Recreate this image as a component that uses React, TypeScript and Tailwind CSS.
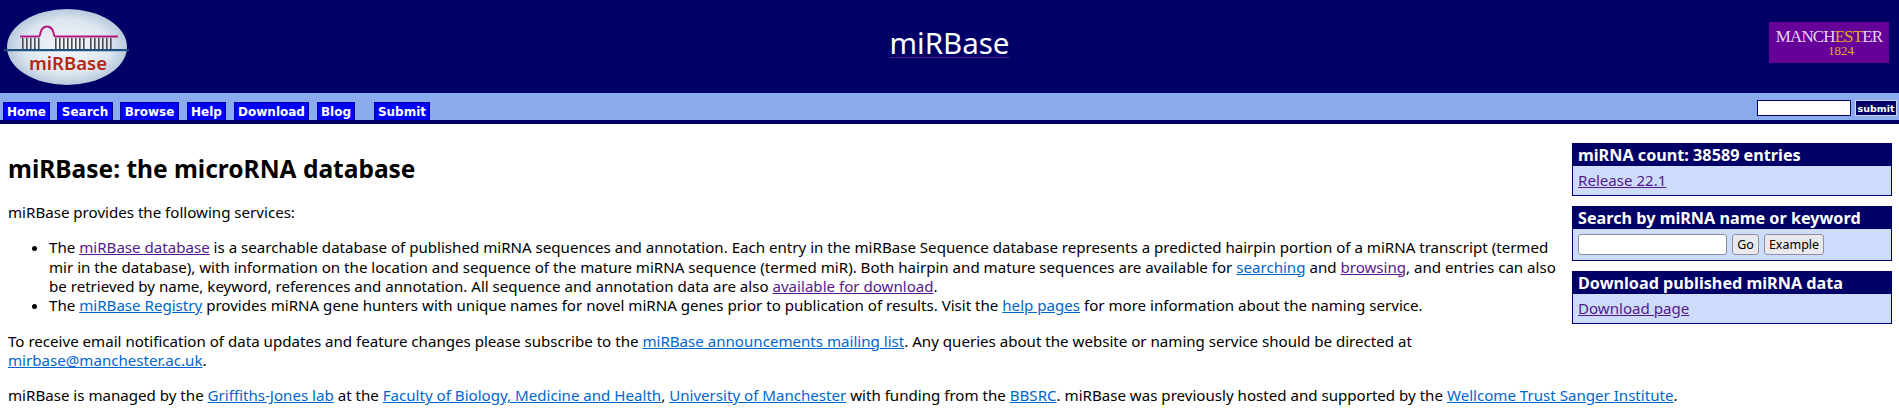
const sans = 'font-["Noto_Sans",sans-serif]';

const tabs = [
  { label: 'Home', cls: 'w-[47px] mr-[7px]' },
  { label: 'Search', cls: 'w-[56px] mr-[7px]' },
  { label: 'Browse', cls: 'w-[59px] mr-[8px]' },
  { label: 'Help', cls: 'w-[39px] mr-[8px]' },
  { label: 'Download', cls: 'w-[75px] mr-[8px]' },
  { label: 'Blog', cls: 'w-[38px] mr-[19px]' },
  { label: 'Submit', cls: 'w-[56px]' },
];

function Logo() {
  const rungs = [22, 26, 30, 34, 38, 55, 59, 63, 67, 71, 75, 79, 83, 90, 94, 98, 102, 106, 110];
  return (
    <svg width="130" height="84" viewBox="0 0 130 84" className="block">
      <defs>
        <radialGradient id="oval" cx="50%" cy="50%" r="55%">
          <stop offset="0%" stopColor="#f4f7fa" />
          <stop offset="65%" stopColor="#dde6ef" />
          <stop offset="100%" stopColor="#a9c0d6" />
        </radialGradient>
      </defs>
      <ellipse cx="67" cy="42" rx="60" ry="38" fill="url(#oval)" />
      {rungs.map((x) => (
        <rect key={x} x={x} y="33" width="1.6" height="11" fill="#4a4a52" />
      ))}
      <path d="M20 31.5H39C41 31.5 39 21.5 47 21.5C55 21.5 53 31.5 55 31.5H118" fill="none" stroke="#b5177f" strokeWidth="2" />
      <rect x="4" y="44" width="125" height="2.2" fill="#1d4f80" />
      <text x="29" y="65" textLength="78" lengthAdjust="spacingAndGlyphs" fontFamily="Noto Sans, sans-serif" fontSize="18" fontWeight="600" fill="#b22a10">
        miRBase
      </text>
    </svg>
  );
}

function SideBox({ title, children }: { title: string; children: React.ReactNode }) {
  return (
    <div className="border border-[#000066] bg-[#cddcfb] mb-[10px]">
      <div className={`h-[22px] bg-[#000066] text-white font-bold text-[16.2px] leading-[22px] pl-[5px] ${sans}`}>{title}</div>
      {children}
    </div>
  );
}

export default function App() {
  return (
    <div className={`min-h-[408px] bg-white text-black text-[15.1px] leading-[19.33px] ${sans}`}>
      <header className="h-[93px] bg-[#000066] flex items-center justify-between">
        <div>
          <Logo />
        </div>
        <a className="text-white text-[29.5px] leading-[38px] underline decoration-[#551a8b] decoration-1 underline-offset-[3px] -mt-[7px]">miRBase</a>
        <div className="w-[120px] h-[41px] mr-[10px] -mt-[8px] bg-[#660099] font-['Liberation_Serif',serif] text-center pt-[8px] leading-[14px]">
          <div className="text-[17px] text-[#e8d8f0] tracking-[-0.9px] whitespace-nowrap">
            MANCH<span className="text-[#e0ac20]">EST</span>ER
          </div>
          <div className="text-[13px] text-[#e0ac20] pl-[24px]">1824</div>
        </div>
      </header>

      <nav className="h-[31px] bg-[#8aabee] border-b-[4px] border-[#000066] flex items-end justify-between">
        <ul className={`flex pl-[3px] font-["DejaVu_Sans",sans-serif]`}>
          {tabs.map((t) => (
            <li key={t.label} className={`${t.cls} h-[18px] bg-[#0000ff] border border-b-0 border-[#000099] text-white font-bold text-[12px] leading-[18px] text-center`}>
              {t.label}
            </li>
          ))}
        </ul>
        <div className="flex gap-[4px] pr-[2px] pb-[4px]">
          <input className="w-[94px] h-[16px] bg-white border border-[#000066]" />
          <button className={`w-[42px] h-[16px] bg-[#000066] border border-[#ccd6ee] text-white font-bold text-[9.5px] leading-[13px] font-["DejaVu_Sans",sans-serif]`}>submit</button>
        </div>
      </nav>

      <div className="flex">
        <main className="flex-1 min-w-0 pl-[8px] pr-[8px] pt-[29px] whitespace-nowrap">
          <h1 className="text-[24.5px] leading-[32px] font-bold">miRBase: the microRNA database</h1>
          <p className="mt-[18px]">miRBase provides the following services:</p>
          <ul className="list-disc pl-[41px] mt-[16px]">
            <li>
              The <a className="text-[#551a8b] underline">miRBase database</a> is a searchable database of published miRNA sequences and annotation. Each entry in the miRBase Sequence database represents a predicted hairpin portion of a miRNA transcript (termed
              <br />
              mir in the database), with information on the location and sequence of the mature miRNA sequence (termed miR). Both hairpin and mature sequences are available for <a className="text-[#0066cc] underline">searching</a> and <a className="text-[#551a8b] underline">browsing</a>, and entries can also
              <br />
              be retrieved by name, keyword, references and annotation. All sequence and annotation data are also <a className="text-[#551a8b] underline">available for download</a>.
            </li>
            <li>
              The <a className="text-[#0066cc] underline">miRBase Registry</a> provides miRNA gene hunters with unique names for novel miRNA genes prior to publication of results. Visit the <a className="text-[#0066cc] underline">help pages</a> for more information about the naming service.
            </li>
          </ul>
          <p className="mt-[16px]">
            To receive email notification of data updates and feature changes please subscribe to the <a className="text-[#0066cc] underline">miRBase announcements mailing list</a>. Any queries about the website or naming service should be directed at
            <br />
            <a className="text-[#0066cc] underline">mirbase@manchester.ac.uk</a>.
          </p>
          <p className="mt-[16px]">
            miRBase is managed by the <a className="text-[#0066cc] underline">Griffiths-Jones lab</a> at the <a className="text-[#0066cc] underline">Faculty of Biology, Medicine and Health</a>, <a className="text-[#0066cc] underline">University of Manchester</a> with funding from the <a className="text-[#0066cc] underline">BBSRC</a>. miRBase was previously hosted and supported by the <a className="text-[#0066cc] underline">Wellcome Trust Sanger Institute</a>.
          </p>
        </main>

        <aside className="w-[320px] shrink-0 mr-[7px] mt-[19px]">
          <SideBox title="miRNA count: 38589 entries">
            <div className="h-[29px] pl-[5px] pt-[5px] text-[#551a8b] underline">Release 22.1</div>
          </SideBox>
          <SideBox title="Search by miRNA name or keyword">
            <div className="h-[31px] flex items-center pl-[5px] gap-[5px]">
              <input className="w-[149px] h-[21px] bg-white border border-[#8f8f9d] rounded-[3px]" />
              <button className="h-[21px] w-[27px] bg-[#e9e9ed] border border-[#8f8f9d] rounded-[3px] text-[12.5px]">Go</button>
              <button className="h-[21px] w-[60px] bg-[#e9e9ed] border border-[#8f8f9d] rounded-[3px] text-[12.5px]">Example</button>
            </div>
          </SideBox>
          <SideBox title="Download published miRNA data">
            <div className="h-[29px] pl-[5px] pt-[5px] text-[#551a8b] underline">Download page</div>
          </SideBox>
        </aside>
      </div>
    </div>
  );
}
